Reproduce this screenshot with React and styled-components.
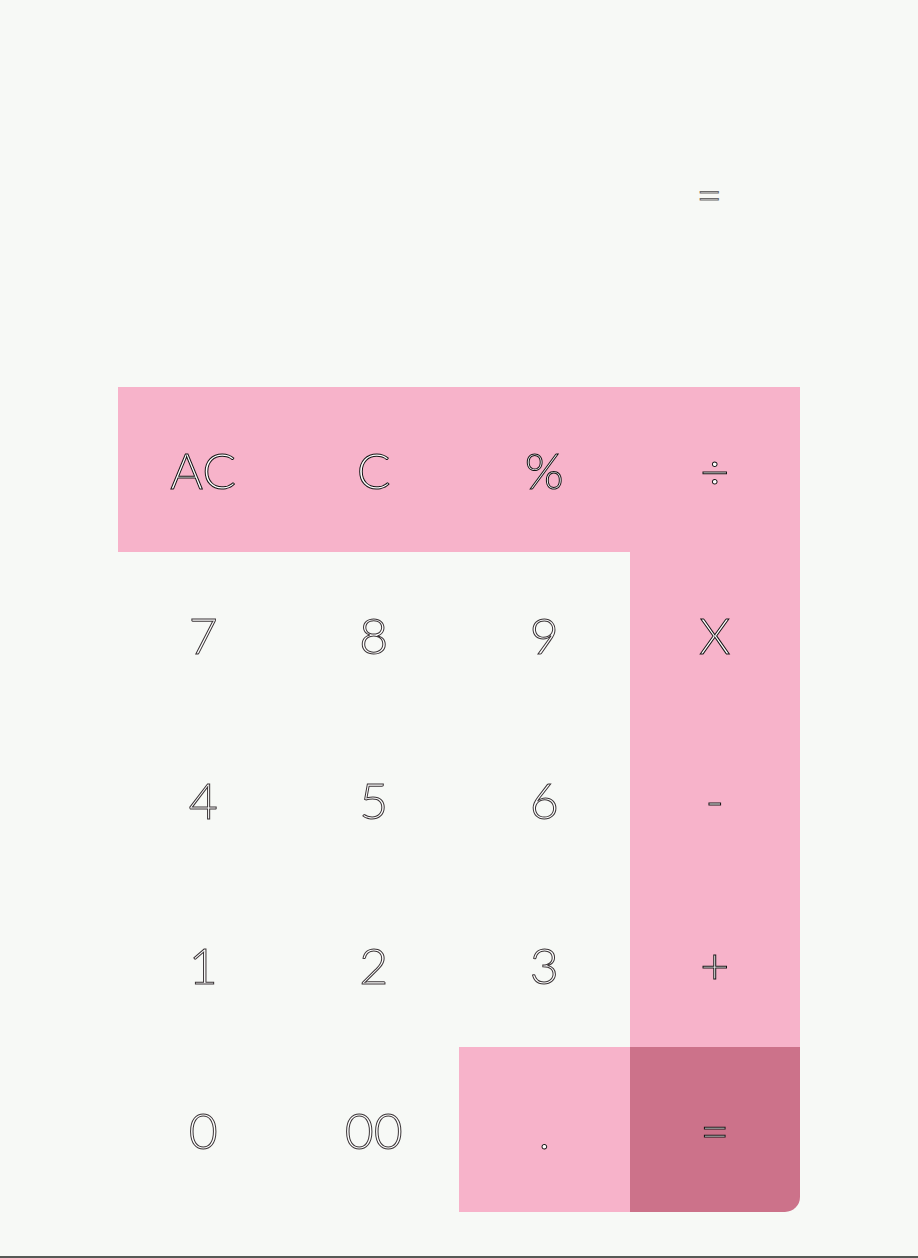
import React from 'react'
import styled, { createGlobalStyle } from 'styled-components'

const GlobalStyle = createGlobalStyle`
  * {
    box-sizing: border-box;
  }
  body {
    margin: 0;
    background-color: #f7f9f6;
    font-family: Lato, "Open Sans", sans-serif;
  }
`

const Page = styled.div`
  min-height: 1258px;
  border-bottom: 2px solid #565a56;
  display: flex;
  justify-content: center;
`

const Calculator = styled.div`
  width: 682px;
  display: flex;
  flex-direction: column;
`

const Display = styled.div`
  height: 387px;
  display: flex;
  align-items: center;
  justify-content: flex-end;
  padding: 0 78px 0 0;
  font-size: 44px;
  font-weight: 300;
  color: white;
  -webkit-text-stroke: 1px #6b6b6b;
  line-height: 1;
`

const Keypad = styled.div`
  display: grid;
  grid-template-columns: repeat(4, 1fr);
  grid-auto-rows: 165px;
  border-bottom-right-radius: 15px;
  overflow: hidden;
`

const colors = {
  light: 'transparent',
  pink: '#f7b3ca',
  dark: '#cc728a',
}

const Key = styled.button`
  border: none;
  padding: 0;
  margin: 0;
  background-color: ${(p) => colors[p.$tone || 'light']};
  font-family: Lato, "Open Sans", sans-serif;
  font-size: 50px;
  font-weight: 300;
  color: white;
  -webkit-text-stroke: 1px ${(p) => (p.$tone && p.$tone !== 'light' ? '#111' : '#3a3436')};
  display: flex;
  align-items: center;
  justify-content: center;
  cursor: pointer;
  line-height: 1;
`

const keys = [
  ['AC', 'pink'], ['C', 'pink'], ['%', 'pink'], ['÷', 'pink'],
  ['7'], ['8'], ['9'], ['X', 'pink'],
  ['4'], ['5'], ['6'], ['-', 'pink'],
  ['1'], ['2'], ['3'], ['+', 'pink'],
  ['0'], ['00'], ['.', 'pink'], ['=', 'dark'],
]

const App = () => {
  return (
    <Page>
      <GlobalStyle />
      <Calculator>
        <Display>=</Display>
        <Keypad>
          {keys.map(([label, tone]) => (
            <Key key={label} $tone={tone}>{label}</Key>
          ))}
        </Keypad>
      </Calculator>
    </Page>
  )
}

export default App
